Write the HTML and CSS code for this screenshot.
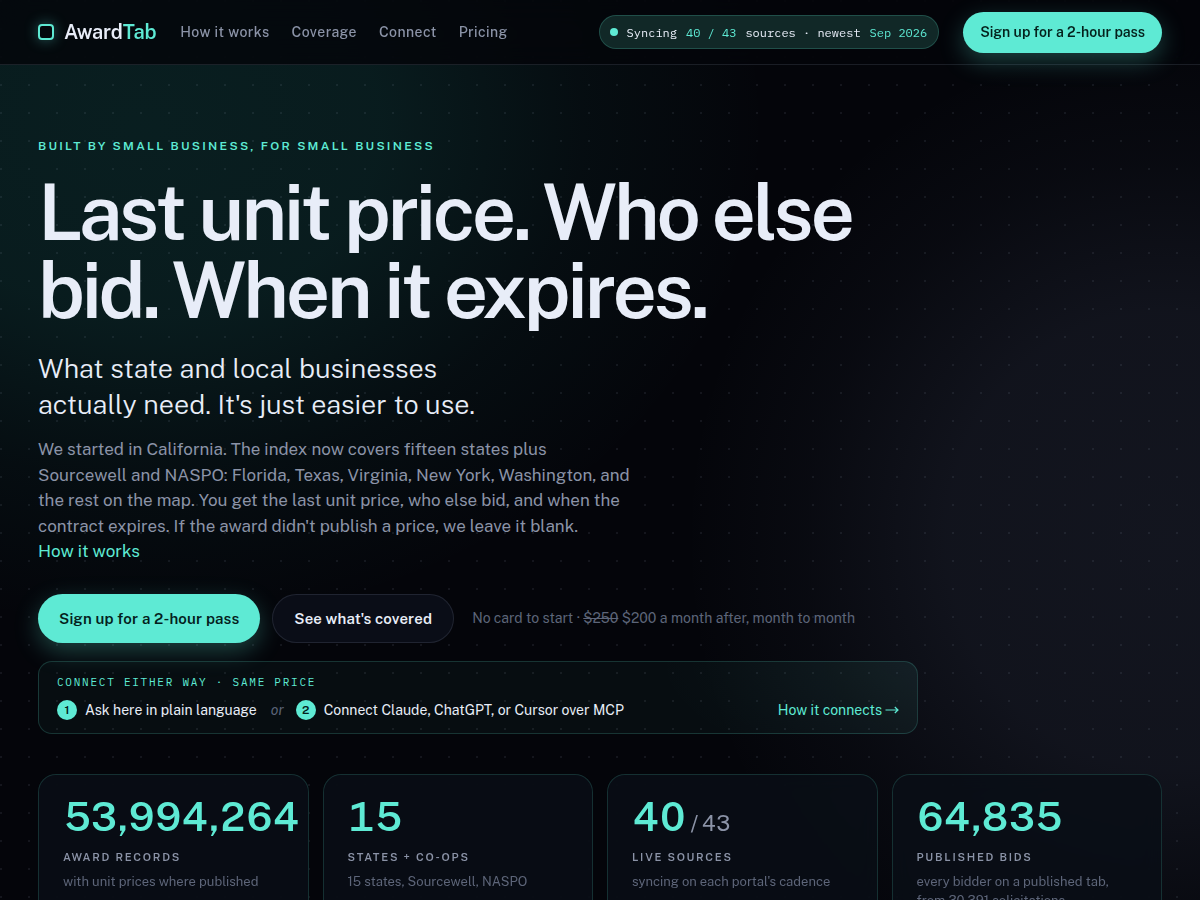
FILE: index.html
```html
<!DOCTYPE html>
<html lang="en">
<head>
<meta charset="utf-8">
<meta name="viewport" content="width=device-width, initial-scale=1">
<title>AwardTab</title>
<link rel="stylesheet" href="styles.css">
</head>
<body>
<header class="topbar">
  <a class="brand" href="#"><span class="brand-mark"></span><span>Award<span class="accent">Tab</span></span></a>
  <nav class="nav" aria-label="Main">
    <a href="#how">How it works</a>
    <a href="#coverage">Coverage</a>
    <a href="#connect">Connect</a>
    <a href="#pricing">Pricing</a>
  </nav>
  <a class="status" href="#coverage"><span class="status-dot"></span><span>Syncing</span><b>40 / 43</b><span>sources · newest</span><b>Sep 2026</b></a>
  <button class="btn btn-primary btn-small" type="button">Sign up for a 2-hour pass</button>
</header>
<main class="hero">
  <p class="eyebrow">Built by small business, for small business</p>
  <h1 class="title">Last unit price. Who else bid. When it expires.</h1>
  <p class="lead">What state and local businesses<br>actually need. It's just easier to use.</p>
  <p class="copy">We started in California. The index now covers fifteen states plus<br>Sourcewell and NASPO: Florida, Texas, Virginia, New York, Washington, and<br>the rest on the map. You get the last unit price, who else bid, and when the<br>contract expires. If the award didn't publish a price, we leave it blank.<br><a href="#how">How it works</a></p>
  <div class="actions">
    <button class="btn btn-primary" type="button">Sign up for a 2-hour pass</button>
    <button class="btn btn-ghost" type="button">See what's covered</button>
    <p class="note">No card to start · <s>$250</s> $200 a month after, month to month</p>
  </div>
  <section class="connect" id="connect">
    <h2 class="connect-title">Connect either way · same price</h2>
    <div class="connect-row">
      <span class="step"><span class="num">1</span>Ask here in plain language</span>
      <em class="or">or</em>
      <span class="step"><span class="num">2</span>Connect Claude, ChatGPT, or Cursor over MCP</span>
      <a class="connect-link" href="#connect">How it connects <svg class="arrow" viewBox="0 0 14 10" aria-hidden="true"><path d="M0.5 5H13M9.8 2L13 5L9.8 8"/></svg></a>
    </div>
  </section>
  <section class="stats" aria-label="Index totals">
    <article class="card"><p class="value">53,994,264</p><h3 class="label">Award records</h3><p class="detail">with unit prices where published</p></article>
    <article class="card"><p class="value">15</p><h3 class="label">States + co-ops</h3><p class="detail">15 states, Sourcewell, NASPO</p></article>
    <article class="card"><p class="value">40<span class="of">/ 43</span></p><h3 class="label">Live sources</h3><p class="detail">syncing on each portal's cadence</p></article>
    <article class="card"><p class="value">64,835</p><h3 class="label">Published bids</h3><p class="detail">every bidder on a published tab,<br>from 30,391 solicitations</p></article>
  </section>
</main>
</body>
</html>
```
FILE: styles.css
```css
* { box-sizing: border-box; }
html { background: #04050a; }
body {
  margin: 0;
  height: 100vh;
  overflow: hidden;
  color: #e8edf8;
  font-family: "Public Sans", Inter, "Liberation Sans", sans-serif;
  background:
    radial-gradient(circle at 1px 1px, rgba(148, 163, 184, 0.11) 1px, transparent 1.5px) 0 0 / 28px 28px,
    radial-gradient(ellipse 52% 56% at 12% 14%, rgba(45, 212, 191, 0.12), rgba(45, 212, 191, 0.11) 38%, rgba(45, 212, 191, 0.04) 70%, transparent),
    radial-gradient(ellipse 40% 56% at 97% 60%, rgba(148, 163, 214, 0.1), rgba(148, 163, 214, 0.09) 45%, rgba(148, 163, 214, 0.03) 75%, transparent),
    #04050a;
}
h1, h2, h3, p { margin: 0; }
a { color: inherit; text-decoration: none; }
.accent { color: #5eead4; }

.topbar {
  display: flex;
  align-items: center;
  height: 65px;
  padding: 0 38px;
  background: rgba(4, 5, 10, 0.82);
  backdrop-filter: blur(14px);
  border-bottom: 1px solid rgba(148, 163, 184, 0.16);
}
.brand { display: flex; align-items: center; gap: 10px; font-size: 20px; font-weight: 600; letter-spacing: -0.01em; }
.brand-mark { width: 16px; height: 16px; border: 2px solid #5eead4; border-radius: 4px; box-shadow: 0 0 14px rgba(94, 234, 212, 0.4); }
.nav { display: flex; gap: 22px; margin-left: 24px; color: #8b93a7; font-size: 14px; font-weight: 500; letter-spacing: 0.03em; }
.status {
  display: flex;
  align-items: center;
  gap: 9px;
  height: 34px;
  margin-left: auto;
  padding: 0 11px 0 10px;
  border: 1px solid rgba(94, 234, 212, 0.2);
  border-radius: 17px;
  background: #112827;
  font-family: "IBM Plex Mono", "DejaVu Sans Mono", monospace;
  font-size: 12px;
}
.status b { color: #5eead4; font-weight: 400; }
.status-dot { width: 8px; height: 8px; border-radius: 50%; background: #5eead4; }

.btn { height: 49px; padding: 0 21px; border: 0; border-radius: 25px; font: inherit; font-size: 15px; font-weight: 600; letter-spacing: 0.01em; white-space: nowrap; }
.btn-primary { background: #5eead4; color: #04211c; box-shadow: 0 8px 24px rgba(94, 234, 212, 0.28); }
.btn-ghost { padding: 0 21px; border: 1px solid rgba(148, 163, 184, 0.16); background: #0a0d17; color: #e8edf8; }
.btn-small { height: 41px; margin-left: 24px; padding: 0 17px; font-size: 14px; letter-spacing: 0; }

.hero { padding: 72px 38px 0; }
.eyebrow { color: #5eead4; font-size: 12px; line-height: 18px; font-weight: 600; letter-spacing: 0.19em; text-transform: uppercase; }
.title { max-width: 880px; margin-top: 18px; font-size: 78px; line-height: 78px; font-weight: 600; letter-spacing: -0.042em; }
.lead { margin-top: 21px; font-size: 27px; line-height: 36px; font-weight: 300; }
.copy { margin-top: 15px; color: #8b93a7; font-size: 17px; line-height: 1.5; }
.copy a { color: #5eead4; }
.actions { display: flex; align-items: center; gap: 12px; margin-top: 29px; }
.note { margin-left: 6px; color: #5d6579; font-size: 14px; }

.connect {
  max-width: 880px;
  margin-top: 18px;
  padding: 12px 18px;
  border: 1px solid rgba(94, 234, 212, 0.18);
  border-radius: 14px;
  background: radial-gradient(ellipse 30% 160% at 100% 0, rgba(94, 234, 212, 0.04), transparent), rgba(94, 234, 212, 0.04);
}
.connect-title { color: #5eead4; font-family: "IBM Plex Mono", "DejaVu Sans Mono", monospace; font-size: 11px; line-height: 16px; font-weight: 400; letter-spacing: 0.16em; text-transform: uppercase; }
.connect-row { display: flex; align-items: center; margin-top: 10px; font-size: 14px; line-height: 21px; }
.step { display: flex; align-items: center; gap: 8px; }
.num { display: grid; place-items: center; width: 20px; height: 20px; border-radius: 50%; background: #5eead4; color: #04211c; font-size: 12px; font-weight: 600; }
.or { margin: 0 12px 0 14px; color: #5d6579; }
.connect-link { display: flex; align-items: center; gap: 3px; margin-left: auto; color: #5eead4; }
.arrow { width: 14px; height: 10px; fill: none; stroke: currentColor; stroke-width: 1.2; }

.stats { display: grid; grid-template-columns: repeat(4, minmax(0, 1fr)); gap: 14px; margin-top: 40px; }
.card { padding: 18px 24px 24px; border: 1px solid rgba(94, 234, 212, 0.16); border-radius: 18px; background: rgba(9, 14, 22, 0.86); backdrop-filter: blur(10px); }
.value { color: #5eead4; font-size: 40px; line-height: 48px; font-weight: 600; letter-spacing: -0.03em; font-variant-numeric: tabular-nums; white-space: nowrap; }
.of { margin-left: 5px; color: #8b93a7; font-size: 22px; line-height: 22px; font-weight: 400; }
.label { margin-top: 8px; color: #8b93a7; font-size: 11px; line-height: 16px; font-weight: 600; letter-spacing: 0.16em; text-transform: uppercase; }
.detail { margin-top: 7px; color: #5d6579; font-size: 13px; line-height: 19px; }
```
